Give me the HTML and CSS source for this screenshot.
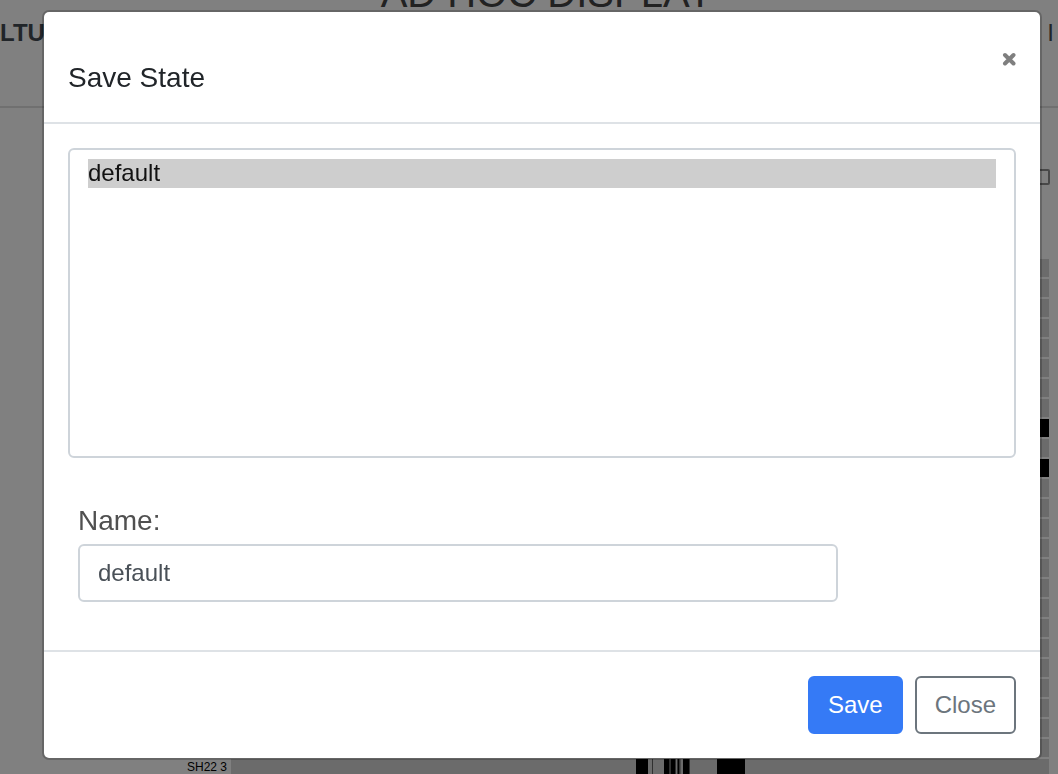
FILE: index.html
```html
<!DOCTYPE html>
<html lang="en">
<head>
<meta charset="utf-8">
<title>Save State</title>
<link rel="stylesheet" href="styles.css">
</head>
<body>
<div class="page">
  <header class="page-header">
    <h1 class="page-title">AD HOC DISPLAY</h1>
    <div class="page-nav"><strong>LTU</strong><span>I</span></div>
  </header>
  <div class="toolbar"><input class="toolbar-check" type="checkbox" aria-label="Show row"></div>
  <div class="tracks">
    <div class="track"></div><div class="track"></div><div class="track"></div><div class="track"></div>
    <div class="track"></div><div class="track"></div><div class="track"></div><div class="track"></div>
    <div class="track track-filled"></div><div class="track"></div><div class="track track-filled"></div><div class="track"></div>
    <div class="track"></div><div class="track"></div><div class="track"></div><div class="track"></div>
    <div class="track"></div><div class="track"></div><div class="track"></div><div class="track"></div>
    <div class="track"></div><div class="track"></div><div class="track"></div><div class="track"></div>
    <div class="track"></div>
    <div class="track-row">
      <span class="track-label">SH22 3</span>
      <div class="track">
        <svg class="track-bars" viewBox="0 0 818 18" preserveAspectRatio="none" aria-hidden="true">
          <path d="M405 0h12v18h-12zM433 0h5v18h-5zM439.500 0h4.500v18h-4.500zM447 0h1.500v18h-1.500zM452 0h6v18h-6zM486 0h28v18h-28z"/>
          <path class="bar-soft" d="M421 0h1v18h-1zM438 0h1.500v18H438zM444 0h1v18h-1zM446 0h1v18h-1zM448.500 0h1v18h-1zM458 0h1v18h-1z"/>
        </svg>
      </div>
    </div>
  </div>
</div>

<div class="overlay">
  <div class="modal" role="dialog" aria-modal="true" aria-labelledby="modal-title">
    <div class="modal-header">
      <h2 class="modal-title" id="modal-title">Save State</h2>
      <button class="dismiss" type="button" aria-label="Dismiss">
        <svg viewBox="0 0 14 14" width="14" height="14" aria-hidden="true"><path d="M3 3l8.500 8.500M11.500 3l-8.500 8.500"/></svg>
      </button>
    </div>
    <div class="modal-body">
      <select class="state-list" size="8" aria-label="Saved states">
        <option selected>default</option>
      </select>
      <div class="field">
        <label class="field-label" for="state-name">Name:</label>
        <input class="field-input" id="state-name" type="text" value="default">
      </div>
    </div>
    <div class="modal-footer">
      <button class="btn btn-primary" type="button">Save</button>
      <button class="btn btn-outline" type="button">Close</button>
    </div>
  </div>
</div>
</body>
</html>
```
FILE: styles.css
```css
* { box-sizing: border-box; }

body {
  margin: 0;
  font-family: "Liberation Sans", Arial, Helvetica, sans-serif;
  font-size: 24px;
  color: #212529;
  background: #808080;
}

button, input, select { font: inherit; }

.page {
  height: 100vh;
  overflow: hidden;
}

.page-header {
  height: 108px;
  border-bottom: 2px solid #707070;
  overflow: hidden;
}

.page-title {
  margin: -32px 0 0;
  padding-left: 36px;
  font-size: 40px;
  font-weight: 400;
  line-height: 50px;
  text-align: center;
  color: #222222;
}

.page-nav {
  display: flex;
  justify-content: space-between;
  padding: 0 4px 0 0;
  line-height: 30px;
}

.toolbar {
  display: flex;
  justify-content: flex-end;
  height: 151px;
  padding: 61px 8px 0 0;
}

.toolbar-check {
  appearance: none;
  width: 16px;
  height: 16px;
  margin: 0;
  border: 2px solid #484848;
  border-radius: 2px;
}

.tracks {
  display: flex;
  flex-direction: column;
  gap: 2px;
  padding-right: 9px;
}

.track {
  flex: none;
  height: 18px;
  margin-left: 231px;
  background: #6b6b6b;
}

.track-filled { background: #000000; }

.track-row {
  display: flex;
  flex: none;
}

.track-row .track {
  flex: 1;
  margin-left: 0;
}

.track-label {
  width: 231px;
  padding-right: 4px;
  font-size: 12px;
  line-height: 16px;
  text-align: right;
  color: #000000;
}

.track-bars {
  display: block;
  width: 100%;
  height: 100%;
}

.bar-soft { fill: #303030; }

.overlay {
  position: fixed;
  inset: 0;
  padding: 10px 16px 0 42px;
}

.modal {
  border: 2px solid rgba(0, 0, 0, 0.2);
  border-radius: 7px;
  background: #ffffff;
  background-clip: padding-box;
}

.modal-header {
  display: flex;
  align-items: flex-start;
  justify-content: space-between;
  padding: 40px 24px 18px;
  border-bottom: 2px solid #dee2e6;
}

.modal-title {
  margin: 0;
  font-size: 28px;
  font-weight: 400;
  line-height: 52px;
}

.dismiss {
  padding: 0;
  border: 0;
  background: none;
  line-height: 0;
}

.dismiss path {
  fill: none;
  stroke: #7f7f7f;
  stroke-width: 4;
  stroke-linecap: round;
}

.modal-body { padding: 24px 24px 48px; }

.state-list {
  display: block;
  width: 100%;
  height: 310px;
  padding: 9px 18px;
  border: 2px solid #ced4da;
  border-radius: 6px;
  background: #ffffff;
  color: #111111;
  outline: 0;
  overflow: hidden;
}

.state-list option {
  min-height: 29px;
  padding: 0;
  line-height: 29px;
}

.state-list option:checked {
  background: #cecece;
  color: #111111;
}

.field { padding: 42px 0 0 10px; }

.field-label {
  display: block;
  margin-bottom: 2px;
  font-size: 28px;
  line-height: 42px;
  color: #505050;
}

.field-input {
  display: block;
  width: 81%;
  height: 58px;
  padding: 0 18px;
  border: 2px solid #ced4da;
  border-radius: 6px;
  background: #ffffff;
  color: #495057;
}

.modal-footer {
  display: flex;
  justify-content: flex-end;
  gap: 12px;
  padding: 24px;
  border-top: 2px solid #dee2e6;
}

.btn {
  padding: 9px 18px;
  border: 2px solid;
  border-radius: 6px;
  line-height: 36px;
}

.btn-primary {
  border-color: #357af6;
  background: #357af6;
  color: #ffffff;
}

.btn-outline {
  border-color: #6c757d;
  background: #ffffff;
  color: #6c757d;
}
```
